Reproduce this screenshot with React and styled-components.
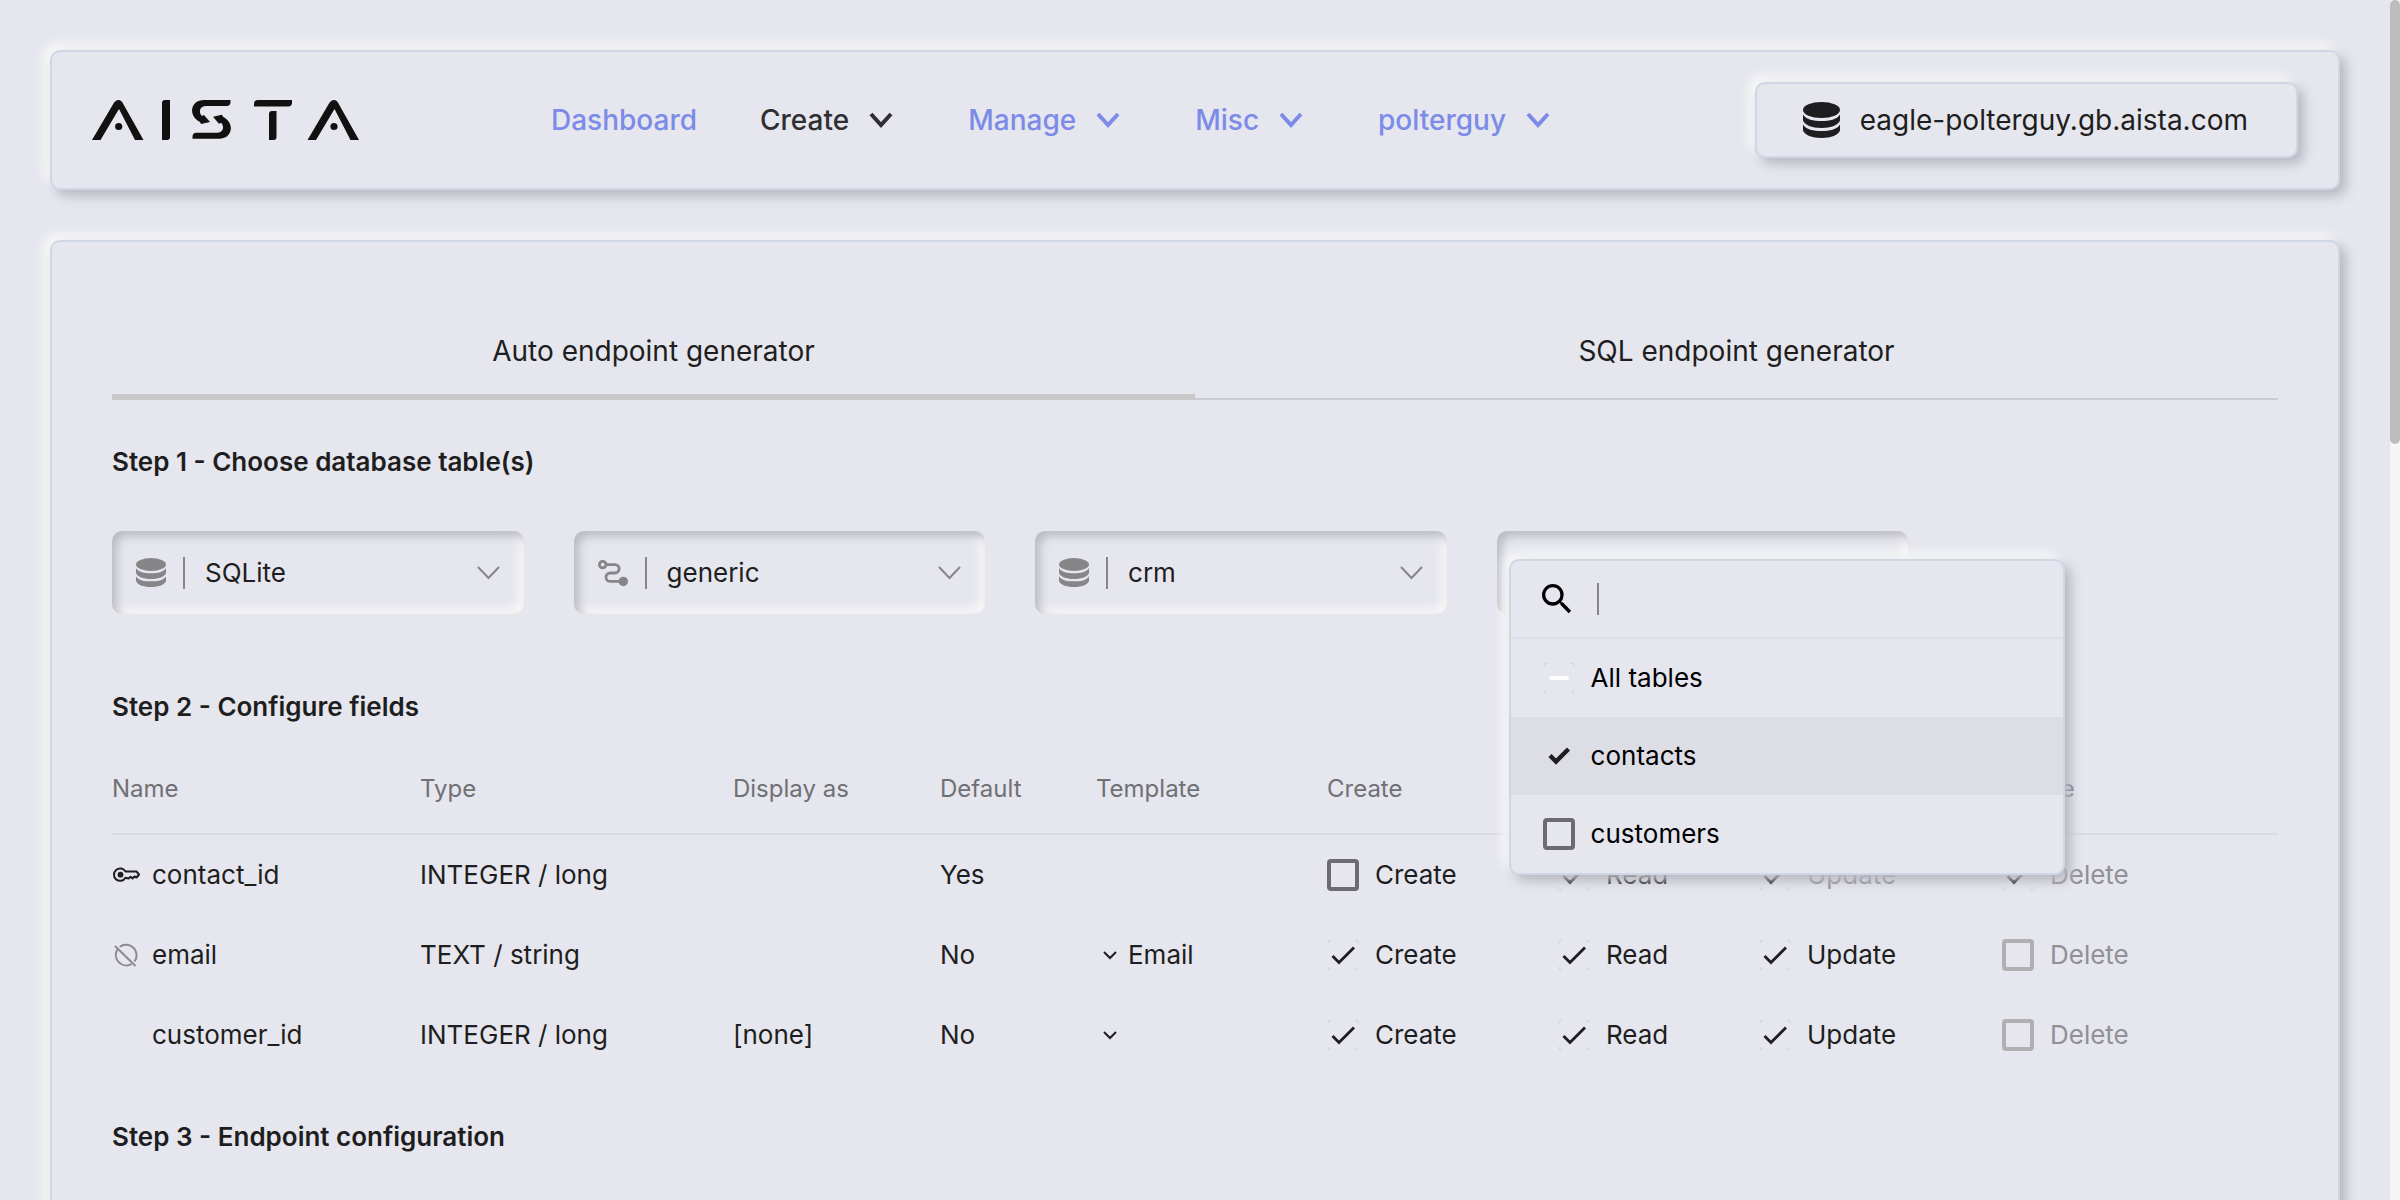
import React from "react";
import styled, { createGlobalStyle, css } from "styled-components";

const bg = "#e5e6ee";
const ink = "#1e1e20";

const raised = css`
  border: 2px solid #cfd7e4;
  border-radius: 10px;
  background: ${bg};
  box-shadow: 6px 6px 12px #b7b8c0, -6px -6px 12px #f9faf8;
`;

const GlobalStyle = createGlobalStyle`
  *, *::before, *::after { box-sizing: border-box; }
  body {
    margin: 0;
    background: ${bg};
    color: ${ink};
    font-family: Inter, "Liberation Sans", sans-serif;
    font-size: 26px;
    line-height: 32px;
  }
  button, input, select { font: inherit; color: inherit; margin: 0; padding: 0; border: 0; background: none; }
  svg { display: block; flex: none; }
`;

const Shell = styled.div`
  display: flex;
  height: 100vh;
`;

const Page = styled.div`
  flex: 1;
  min-width: 0;
  padding: 50px;
  overflow-y: auto;
  scrollbar-width: none;
`;

const Scrollbar = styled.div`
  width: 10px;
  background: #f5f5f6;
`;

const Thumb = styled.div`
  height: 37%;
  border-radius: 5px;
  background: #bdbdbd;
`;

const Header = styled.header`
  ${raised}
  display: flex;
  align-items: center;
  height: 140px;
  padding: 0 40px;
  font-size: 28px;
`;

const Logo = styled.a`
  width: 459px;
  color: #111;
`;

const Nav = styled.nav`
  display: flex;
  gap: 63px;
  flex: 1;
`;

const NavLink = styled.a`
  display: flex;
  align-items: center;
  gap: 8px;
  font-weight: 500;
  text-decoration: none;
  color: ${(p) => (p.$active ? "#2f2f31" : "#7c8be8")};
`;

const HostButton = styled.button`
  && { ${raised} }
  display: flex;
  align-items: center;
  gap: 20px;
  height: 76px;
  padding: 0 48px 0 46px;
`;

const Card = styled.main`
  ${raised}
  margin-top: 50px;
  padding: 60px 60px 240px;
`;

const Tabs = styled.div`
  display: flex;
  margin-bottom: 46px;
  border-bottom: 2px solid #c9cad3;
`;

const Tab = styled.button`
  flex: 1;
  height: 98px;
  margin-bottom: -2px;
  font-size: 28px;
  && {
    padding-top: 6px;
    border-bottom: 6px solid ${(p) => (p.$active ? "#c8c8ca" : "transparent")};
  }
`;

const StepTitle = styled.h2`
  margin: 0;
  font-size: 26px;
  line-height: 32px;
  font-weight: 600;
`;

const Fields = styled.div`
  display: flex;
  gap: 50px;
  margin: 53px 0 77px;
`;

const FieldSlot = styled.div`
  position: relative;
  flex: 0 0 19%;
`;

const FieldBox = styled.label`
  display: flex;
  align-items: center;
  height: 83px;
  padding: 0 24px;
  border-radius: 10px;
  color: #868688;
  box-shadow: inset 5px 5px 10px #bbbcc2, inset -5px -5px 10px #f9f9f9;
`;

const Divider = styled.span`
  width: 2px;
  height: 32px;
  background: #868688;
  margin: ${(p) => p.$margin};
`;

const Select = styled.select`
  appearance: none;
  flex: 1;
  min-width: 0;
  height: 40px;
  && { color: ${ink}; }
`;

const Popup = styled.div`
  ${raised}
  position: absolute;
  top: 28px;
  left: 12px;
  z-index: 2;
  width: 556px;
  color: #000;
`;

const SearchRow = styled.label`
  display: flex;
  align-items: center;
  height: 78px;
  padding: 0 32px 0 26px;
  border-bottom: 2px solid #dcdde6;
`;

const SearchInput = styled.input`
  flex: 1;
  min-width: 0;
  outline: 0;
`;

const Option = styled.div`
  display: flex;
  align-items: center;
  height: 78px;
  padding: 0 32px;
  background: ${(p) => (p.$selected ? "#dddde5" : "transparent")};
`;

const CheckLabel = styled.label`
  display: flex;
  align-items: center;
  gap: 16px;
  color: ${(p) => (p.$disabled ? "#909095" : "inherit")};
`;

const CheckSlot = styled.span`
  display: grid;
  width: 32px;
  height: 32px;
  > * { grid-area: 1 / 1; }
  > svg { color: ${ink}; pointer-events: none; }
`;

const CheckInput = styled.input`
  appearance: none;
  width: 32px;
  height: 32px;
  && {
    border: 4px solid #6c6c70;
    border-radius: 4px;
  }
  &&:disabled { border-color: #b0b0b2; }
  &&:checked, &&[data-mixed="true"] { border-color: transparent; }
`;

const Table = styled.table`
  width: 100%;
  margin: 22px 0 46px;
  border-collapse: separate;
  border-spacing: 0;
  table-layout: fixed;
  text-align: left;
`;

const Th = styled.th`
  height: 90px;
  padding: 0;
  font-size: 24px;
  font-weight: 400;
  color: #707075;
  border-bottom: 2px solid #d9dae3;
`;

const Td = styled.td`
  height: 80px;
  padding: 0;
`;

const NameCell = styled.div`
  display: flex;
  align-items: center;
  gap: 12px;
`;

const IconSlot = styled.span`
  width: 28px;
`;

const TemplateButton = styled.button`
  display: flex;
  align-items: center;
  gap: 4px;
`;

const LogoMark = () => (
  <svg width="268" height="40" viewBox="0 0 268 40" fill="currentColor">
    <path d="M0 40L21.500 3.500Q23.500 0 26.500 0T31 3.500L51.500 40H43L27 9L8.500 40Z" />
    <circle cx="26.700" cy="26.500" r="3.600" />
    <path d="M70 40V3q0-3 3-3h5v37q0 3-3 3z" />
    <path d="M138.500 0v2q0 4-4 4h-20.500c-6 0-8 6-4 10l2-1 6 7-9 2-1-2c-12-6-10-22 4-22z" />
    <path d="M138.500 0v2q0 4-4 4h-20.500c-6 0-8 6-4 10l2-1 6 7-9 2-1-2c-12-6-10-22 4-22z" transform="rotate(180 119.500 19.400)" />
    <path d="M162 6.500V4q0-4 4-4h34v2.500q0 4-4 4z" />
    <path d="M177 40V14q0-3 3-3h4.500v26q0 3-3 3z" />
    <path d="M215.500 40L237 3.500Q239 0 242 0T246.500 3.500L267 40H258.500L242.500 9L224 40Z" />
    <circle cx="242" cy="26.500" r="3.600" />
  </svg>
);

const Database = ({ w, h }) => (
  <svg width={w} height={h} viewBox="0 0 36 36" preserveAspectRatio="none" fill="currentColor">
    <ellipse cx="18" cy="8" rx="18" ry="8" />
    <path d="M0 12.500C3 17.500 10 19 18 19s15-1.500 18-6.500v6c-1.500 4.500-8.500 7.500-18 7.500S1.500 23 0 18.500z" />
    <path d="M0 22.500C3 27.500 10 29 18 29s15-1.500 18-6.500v6c-1.500 4.500-8.500 7.500-18 7.500S1.500 33 0 28.500z" />
  </svg>
);

const Route = () => (
  <svg width="30" height="28" viewBox="0 0 32 28" fill="none" stroke="currentColor" strokeWidth="3">
    <circle cx="5" cy="5" r="3.500" />
    <path d="M9 5h9a4.500 4.500 0 0 1 0 9h-5a4.500 4.500 0 0 0 0 9h10" />
    <circle cx="27" cy="23" r="5" fill="currentColor" stroke="none" />
  </svg>
);

const Chevron = ({ w, h, sw, box }) => (
  <svg width={box || w} height={h + 4} viewBox={`${-((box || w) / 2)} -2 ${box || w} ${h + 4}`} fill="none" stroke="currentColor" strokeWidth={sw}>
    <path d={`M${-w / 2 + 1} 1L0 ${h - 2}L${w / 2 - 1} 1`} />
  </svg>
);

const SearchIcon = () => (
  <svg width="40" height="40" viewBox="0 0 24 24" fill="currentColor">
    <path d="M15.500 14h-.79l-.28-.27A6.471 6.471 0 0 0 16 9.500 6.500 6.500 0 1 0 9.500 16c1.610 0 3.090-.59 4.230-1.570l.27.28v.79l5 4.990L20.490 19l-4.990-5zm-6 0C7.010 14 5 11.990 5 9.500S7.010 5 9.500 5 14 7.010 14 9.500 11.990 14 9.500 14z" />
  </svg>
);

const KeyIcon = () => (
  <svg width="28" height="28" viewBox="0 0 28 28" fill="none" stroke="currentColor" strokeWidth="2" strokeLinejoin="round">
    <path d="M13.500 10.500H24.500L27 13.500L24.500 16.500L22.500 15.500L20.500 17.500L18.500 15.800L16.500 17.500L13.500 16.800A6.200 6.200 0 1 1 13.500 10.500Z" />
    <circle cx="8.500" cy="13.700" r="2.900" fill="currentColor" stroke="none" />
  </svg>
);

const NoIndex = () => (
  <svg width="28" height="28" viewBox="0 0 28 28" fill="none" stroke="#8a8a8d" strokeWidth="2">
    <path d="M7.800 5.800A10.500 10.500 0 0 1 22.500 20.500M19.500 23.100A10.500 10.500 0 0 1 5.200 8.800M3 5L23.500 25" />
  </svg>
);

const CheckMark = ({ kind }) => (
  <svg width="32" height="32" viewBox="0 0 32 32" fill="none">
    {kind !== "bold" && (
      <path d="M1 4Q1 1 4 1M28 1q3 0 3 3M31 28q0 3-3 3M4 31q-3 0-3-3" stroke="#d0d0d8" strokeWidth="1" />
    )}
    {kind === "mixed" && <path d="M8 16h16" stroke="#fcfcfc" strokeWidth="4" strokeLinecap="round" />}
    {kind === "thin" && <path d="M5.500 17L12 23.500L27 8.500" stroke="currentColor" strokeWidth="2.800" />}
    {kind === "bold" && <path d="M7 15.500L13 21.500L25.500 9" stroke="currentColor" strokeWidth="4.500" />}
  </svg>
);

function Check({ label, checked, disabled, mixed, bold }) {
  return (
    <CheckLabel $disabled={disabled}>
      <CheckSlot>
        <CheckInput type="checkbox" defaultChecked={checked} disabled={disabled} data-mixed={mixed ? "true" : "false"} />
        {(checked || mixed) && <CheckMark kind={mixed ? "mixed" : bold ? "bold" : "thin"} />}
      </CheckSlot>
      {label}
    </CheckLabel>
  );
}

function Field({ icon, name, value }) {
  return (
    <FieldSlot>
      <FieldBox>
        {icon}
        <Divider $margin="0 20px 0 17px" />
        <Select aria-label={name} defaultValue={value}>
          <option>{value}</option>
        </Select>
        <Chevron w={23} h={14} sw={2} />
      </FieldBox>
    </FieldSlot>
  );
}

const menu = [
  { label: "Dashboard", leaf: true },
  { label: "Create", active: true },
  { label: "Manage" },
  { label: "Misc" },
  { label: "polterguy" },
];

const columns = [
  ["Name", 308], ["Type", 313], ["Display as", 207], ["Default", 156], ["Template", 231],
  ["Create", 231], ["Read", 201], ["Update", 243], ["Delete", 276],
];

const rows = [
  { icon: <KeyIcon />, name: "contact_id", type: "INTEGER / long", display: "", def: "Yes", template: null, ops: [[0, 0], [1, 0], [1, 1], [1, 1]] },
  { icon: <NoIndex />, name: "email", type: "TEXT / string", display: "", def: "No", template: "Email", ops: [[1, 0], [1, 0], [1, 0], [0, 1]] },
  { icon: null, name: "customer_id", type: "INTEGER / long", display: "[none]", def: "No", template: "", ops: [[1, 0], [1, 0], [1, 0], [0, 1]] },
];

const opNames = ["Create", "Read", "Update", "Delete"];

export default function App() {
  return (
    <Shell>
      <GlobalStyle />
      <Page>
        <Header>
          <Logo href="#" aria-label="Aista">
            <LogoMark />
          </Logo>
          <Nav>
            {menu.map((m) => (
              <NavLink key={m.label} href="#" $active={m.active}>
                {m.label}
                {!m.leaf && <Chevron w={22} h={14} sw={4} box={48} />}
              </NavLink>
            ))}
          </Nav>
          <HostButton>
            <Database w={37} h={36} />
            eagle-polterguy.gb.aista.com
          </HostButton>
        </Header>

        <Card>
          <Tabs>
            <Tab $active>Auto endpoint generator</Tab>
            <Tab>SQL endpoint generator</Tab>
          </Tabs>

          <StepTitle>Step 1 - Choose database table(s)</StepTitle>
          <Fields>
            <Field name="Database type" value="SQLite" icon={<Database w={30} h={29} />} />
            <Field name="Connection" value="generic" icon={<Route />} />
            <Field name="Database" value="crm" icon={<Database w={30} h={29} />} />
            <FieldSlot>
              <FieldBox as="div" />
              <Popup>
                <SearchRow>
                  <SearchIcon />
                  <Divider $margin="0 20px" />
                  <SearchInput type="text" aria-label="Search tables" />
                </SearchRow>
                <Option><Check label="All tables" mixed /></Option>
                <Option $selected><Check label="contacts" checked bold /></Option>
                <Option><Check label="customers" /></Option>
              </Popup>
            </FieldSlot>
          </Fields>

          <StepTitle>Step 2 - Configure fields</StepTitle>
          <Table>
            <colgroup>
              {columns.map(([c, w]) => (
                <col key={c} style={{ width: `${(w / 2166) * 100}%` }} />
              ))}
            </colgroup>
            <thead>
              <tr>{columns.map(([c]) => <Th key={c}>{c}</Th>)}</tr>
            </thead>
            <tbody>
              {rows.map((r) => (
                <tr key={r.name}>
                  <Td><NameCell><IconSlot>{r.icon}</IconSlot>{r.name}</NameCell></Td>
                  <Td>{r.type}</Td>
                  <Td>{r.display}</Td>
                  <Td>{r.def}</Td>
                  <Td>
                    {r.template !== null && (
                      <TemplateButton aria-label="Template">
                        <Chevron w={14} h={9} sw={2} box={28} />
                        {r.template}
                      </TemplateButton>
                    )}
                  </Td>
                  {r.ops.map(([checked, disabled], i) => (
                    <Td key={opNames[i]}>
                      <Check label={opNames[i]} checked={!!checked} disabled={!!disabled} />
                    </Td>
                  ))}
                </tr>
              ))}
            </tbody>
          </Table>

          <StepTitle>Step 3 - Endpoint configuration</StepTitle>
        </Card>
      </Page>
      <Scrollbar><Thumb /></Scrollbar>
    </Shell>
  );
}
